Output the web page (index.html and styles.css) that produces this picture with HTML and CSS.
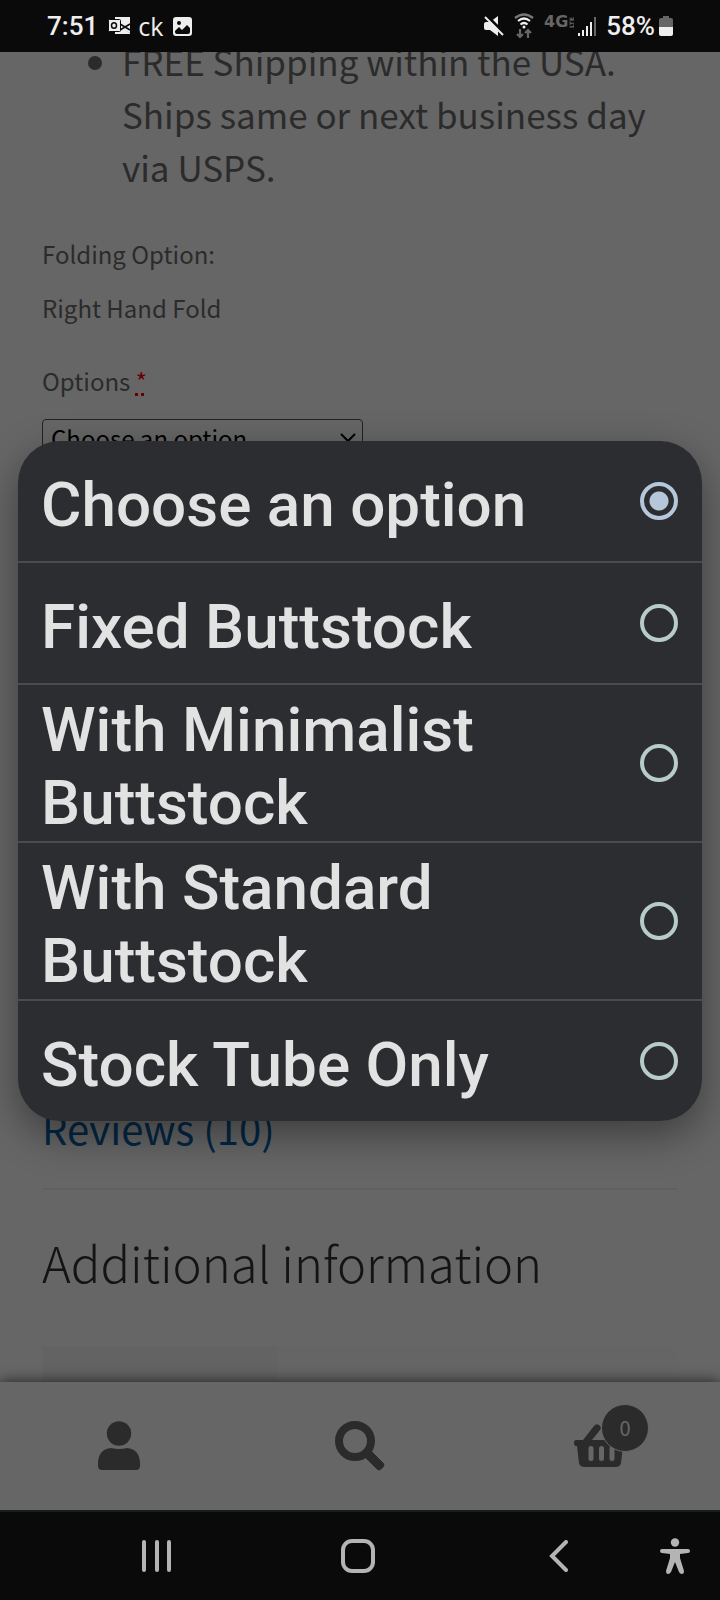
FILE: index.html
```html
<!DOCTYPE html>
<html lang="en">
<head>
  <meta charset="UTF-8">
  <meta name="viewport" content="width=device-width, initial-scale=1.0">
  <title>Folding Stock - Options</title>
  <link rel="stylesheet" href="styles.css">
</head>
<body>

  <!-- STATUS BAR -->
  <header class="status-bar">
    <div class="status-left">
      <span class="status-text">7:51</span>
      <svg class="icon-mail" width="24" height="20" viewBox="0 0 24 20">
        <path d="M7 1h15v10l-5 3 5 3v1H7z" fill="#eee"/>
        <path d="M12 12l10-5v10z" fill="#eee"/>
        <path d="M12 8l10 6M12 14l10-6" stroke="#0a0a0a" stroke-width="1.5" fill="none"/>
        <rect x="0.5" y="3.5" width="12" height="12" rx="1" fill="#eee" stroke="#0a0a0a"/>
        <ellipse cx="6" cy="9.500" rx="2.500" ry="2.800" fill="none" stroke="#0a0a0a" stroke-width="1.500"/>
      </svg>
      <span class="status-ck">ck</span>
      <svg width="19" height="19" viewBox="0 0 19 19">
        <rect width="19" height="19" rx="3" fill="#eee"/>
        <circle cx="6" cy="6" r="2" fill="#0a0a0a"/>
        <path d="M2 14l4-4 3 3 5-5 3 3v4q0 2-2 2H4q-2 0-2-2z" fill="#0a0a0a"/>
      </svg>
    </div>
    <div class="status-right">
      <svg width="20" height="20" viewBox="0 0 20 20">
        <path d="M0 8q0-2 2-2h4l8-6v20l-8-6H2q-2 0-2-2z" fill="#eee"/>
        <path d="M3 0l18 18" stroke="#0a0a0a" stroke-width="3"/>
        <path d="M1 1l18 18" stroke="#eee" stroke-width="2"/>
      </svg>
      <svg width="20" height="26" viewBox="0 0 20 26">
        <path d="M1 5q9-7 18 0" fill="none" stroke="#777" stroke-width="2.500"/>
        <path d="M4 8q6-5 12 0M6.500 11.500q3.500-3 7 0" fill="none" stroke="#eee" stroke-width="2.200"/>
        <circle cx="10" cy="14" r="1.500" fill="#eee"/>
        <path d="M6 16v8M3 21l3 3 3-3M14 25v-8M11 20l3-3 3 3" fill="none" stroke="#666" stroke-width="2.200"/>
      </svg>
      <svg class="icon-lte" width="30" height="24" viewBox="0 0 30 24">
        <text x="0" y="13" class="lte-main">4G</text>
        <text transform="translate(30 14) rotate(-90)" class="lte-side">LTE</text>
      </svg>
      <svg width="18" height="20" viewBox="0 0 18 20">
        <path d="M1 17v3M5 14v6M9 10v10M13 6v14" stroke="#eee" stroke-width="2"/>
        <path d="M17 1v19" stroke="#666" stroke-width="2"/>
      </svg>
      <span class="status-text">58%</span>
      <svg class="icon-battery" width="14" height="22" viewBox="0 0 14 22">
        <path d="M4 1h6v2h2q2 0 2 2v7H0V5q0-2 2-2h2z" fill="#666"/>
        <path d="M0 12h14v7q0 2-2 2H2q-2 0-2-2z" fill="#eee"/>
      </svg>
    </div>
  </header>

  <!-- STORE PAGE -->
  <div class="browser">
    <main class="product">
      <ul class="features">
        <li>FREE Shipping within the USA. Ships same or next business day via USPS.</li>
      </ul>

      <p>Folding Option:</p>
      <p>Right Hand Fold</p>

      <form class="addons">
        <label for="options">Options <abbr class="required">*</abbr></label>
        <div class="select-wrap">
          <select id="options">
            <option>Choose an option</option>
          </select>
          <svg class="select-arrow" width="18" height="11" viewBox="0 0 18 11">
            <path d="M2 2l7 7 7-7" fill="none" stroke="#000" stroke-width="2"/>
          </svg>
        </div>
      </form>

      <div class="tabs">
        <a href="#reviews">Reviews (10)</a>
      </div>

      <h2>Additional information</h2>
      <div class="attributes">
        <div class="attribute-name"></div>
        <div class="attribute-value"></div>
      </div>
    </main>

    <nav class="footer-bar">
      <a href="#account" aria-label="My Account">
        <svg width="44" height="50" viewBox="0 0 44 50">
          <circle cx="21" cy="12.500" r="12.200"/>
          <path d="M0 45V41Q1 28 13 27q4 1 8 1t8-1q12 1 13 14v4q0 4-4 4H4q-4 0-4-4z"/>
        </svg>
      </a>
      <a href="#search" aria-label="Search">
        <svg width="50" height="50" viewBox="0 0 50 50">
          <circle cx="20" cy="20" r="16" fill="none" stroke="#6d6d6d" stroke-width="8"/>
          <path d="M29 35l6-6 13 13q2 2 0 4l-2 2q-2 2-4 0z" stroke="#6d6d6d" stroke-width="1"/>
        </svg>
      </a>
      <a href="#cart" aria-label="Cart" class="cart">
        <svg width="52" height="44" viewBox="0 0 52 44">
          <path d="M2 16h7L20 2q2-3 5-1t1 5l-8 10h32q2 0 2 3t-2 3h-1l-2 17q-1 4-5 4H10q-4 0-5-4L3 22H2q-2 0-2-3t2-3z"/>
          <path d="M17 24.500v10M27.500 24.500v10M38 24.500v10" stroke="#fff" stroke-width="5" stroke-linecap="round"/>
        </svg>
        <span class="count">0</span>
      </a>
    </nav>

    <!-- OPTION PICKER -->
    <div class="backdrop">
      <div class="picker" role="dialog" aria-label="Options">
        <label class="choice" for="c1"><span>Choose an option</span><input type="radio" name="choice" id="c1" checked></label>
        <label class="choice" for="c2"><span>Fixed Buttstock</span><input type="radio" name="choice" id="c2"></label>
        <label class="choice" for="c3"><span>With Minimalist Buttstock</span><input type="radio" name="choice" id="c3"></label>
        <label class="choice" for="c4"><span>With Standard Buttstock</span><input type="radio" name="choice" id="c4"></label>
        <label class="choice" for="c5"><span>Stock Tube Only</span><input type="radio" name="choice" id="c5"></label>
      </div>
    </div>
  </div>

  <!-- SYSTEM NAVIGATION -->
  <nav class="system-nav">
    <button type="button" aria-label="Recents">
      <svg width="30" height="32" viewBox="0 0 30 32">
        <path d="M2 2v28M15 2v28M27 2v28" stroke="#b4b4b4" stroke-width="4" stroke-linecap="round"/>
      </svg>
    </button>
    <button type="button" aria-label="Home">
      <svg width="34" height="34" viewBox="0 0 34 34">
        <rect x="2" y="2" width="30" height="30" rx="9" fill="none" stroke="#b4b4b4" stroke-width="4"/>
      </svg>
    </button>
    <button type="button" aria-label="Back">
      <svg width="20" height="32" viewBox="0 0 20 32">
        <path d="M17 2L3 16l14 14" fill="none" stroke="#b4b4b4" stroke-width="4" stroke-linecap="round"/>
      </svg>
    </button>
    <button type="button" aria-label="Accessibility" class="access">
      <svg width="30" height="36" viewBox="0 0 30 36">
        <circle cx="15" cy="4.500" r="4.200" fill="#b4b4b4"/>
        <path d="M2 11h26q2 0 2 2t-2 2l-8 1v4l4 13q0 3-2 3t-3-2l-4-10-4 10q-1 2-3 2t-2-3l4-13v-4l-8-1q-2 0-2-2t2-2z" fill="#b4b4b4"/>
      </svg>
    </button>
  </nav>

</body>
</html>
```
FILE: styles.css
```css
* {
  box-sizing: border-box;
  margin: 0;
  padding: 0;
}

body {
  display: flex;
  flex-direction: column;
  height: 100vh;
  font-family: "Noto Sans CJK SC", "Noto Sans", sans-serif;
  background: #0a0a0a;
  color: #6d6d6d;
  overflow: hidden;
}

svg {
  display: block;
}

/* Status bar */
.status-bar {
  display: flex;
  justify-content: space-between;
  align-items: center;
  height: 52px;
  padding: 0 47px;
  color: #eee;
  font-family: Roboto, sans-serif;
  line-height: 30px;
}

.status-left,
.status-right {
  display: flex;
  align-items: center;
}

.status-left {
  gap: 10px;
}

.status-right {
  gap: 10px;
}

.status-text {
  font-size: 26px;
  font-weight: 500;
}

.status-ck {
  font-family: "Open Sans", sans-serif;
  font-size: 25px;
}

.icon-mail {
  margin-right: -4px;
}

.icon-lte {
  margin-right: -6px;
}

.lte-main {
  font-family: "DejaVu Sans", sans-serif;
  font-size: 16px;
  font-weight: bold;
  fill: #666;
}

.lte-side {
  font-family: "DejaVu Sans", sans-serif;
  font-size: 6px;
  font-weight: bold;
  fill: #666;
}

.icon-battery {
  margin-left: -6px;
}

/* Product page, scrolled part way down */
.browser {
  position: relative;
  display: flex;
  flex-direction: column;
  flex: 1;
  min-height: 0;
  overflow: hidden;
  background: #fff;
}

.product {
  flex: 1;
  min-height: 0;
  margin-top: -18px;
  padding: 0 42px;
  font-size: 24px;
  line-height: 40px;
}

.features {
  margin-bottom: 41px;
  padding-left: 80px;
  font-size: 35px;
  line-height: 53px;
}

.product p {
  margin-bottom: 14px;
}

.addons {
  margin-top: 33px;
}

.addons label {
  display: block;
  margin-bottom: 17px;
}

.required {
  color: #f00;
  text-decoration: underline dotted 3px;
}

.select-wrap {
  position: relative;
  width: 321px;
}

.select-wrap select {
  appearance: none;
  width: 100%;
  height: 50px;
  padding: 0 8px 12px;
  border: 1px solid #555;
  border-radius: 4px;
  background: transparent;
  color: #000;
  font-family: inherit;
  font-size: 24px;
}

.select-arrow {
  position: absolute;
  top: 14px;
  right: 6px;
}

.tabs {
  margin-top: 629px;
  padding-bottom: 30px;
  border-bottom: 2px solid #f3f3f3;
  font-size: 40px;
  line-height: 60px;
}

.tabs a {
  color: #0862b0;
  text-decoration: none;
}

.product h2 {
  margin: 42px 0 54px;
  color: #333;
  font-size: 49px;
  font-weight: 300;
  line-height: 60px;
}

.attributes {
  display: grid;
  grid-template-columns: 37% 1fr;
  height: 100px;
}

.attribute-name {
  background: #f8f8f8;
}

.attribute-value {
  background: #fdfdfd;
}

/* Store footer bar */
.footer-bar {
  position: relative;
  display: grid;
  grid-template-columns: repeat(3, 1fr);
  place-items: center;
  height: 128px;
  background: #fff;
  box-shadow: 0 0 14px rgba(0, 0, 0, 0.7);
}

.footer-bar a {
  position: relative;
  fill: #6d6d6d;
}

.count {
  position: absolute;
  top: -20px;
  left: 27px;
  width: 48px;
  height: 48px;
  border: 1px solid #fff;
  border-radius: 50%;
  background: #6d6d6d;
  color: #fff;
  font-size: 20px;
  line-height: 46px;
  text-align: center;
}

/* Option picker */
.backdrop {
  position: absolute;
  inset: 0;
  display: flex;
  align-items: center;
  padding: 0 18px;
  background: rgba(0, 0, 0, 0.6);
}

.picker {
  width: 100%;
  border-radius: 42px;
  background: #2c2d31;
  box-shadow: 0 14px 40px rgba(0, 0, 0, 0.4);
  overflow: hidden;
}

.choice {
  display: flex;
  justify-content: space-between;
  align-items: center;
  min-height: 120px;
  padding: 0 24px 0 23px;
  color: #e2e2e2;
  font-family: Roboto, sans-serif;
  font-size: 62px;
  font-weight: 500;
  line-height: 73px;
}

.choice + .choice {
  min-height: 122px;
  border-top: 2px solid #4a4b4f;
}

.choice span {
  max-width: 500px;
  padding: 8px 0 2px;
}

.choice input {
  appearance: none;
  flex: none;
  width: 38px;
  height: 38px;
  border: 4px solid #b7cbc8;
  border-radius: 50%;
}

.choice input:checked {
  border-color: #b5c7db;
  background: radial-gradient(circle, #b5c7db 9px, transparent 10px);
}

/* System navigation */
.system-nav {
  display: grid;
  grid-template-columns: 201fr 201fr 201fr 60fr;
  place-items: center;
  height: 90px;
  padding-left: 56px;
  border-top: 2px solid #171e1e;
}

.system-nav button {
  border: none;
  background: none;
  cursor: pointer;
}

.system-nav .access {
  justify-self: start;
}
```
